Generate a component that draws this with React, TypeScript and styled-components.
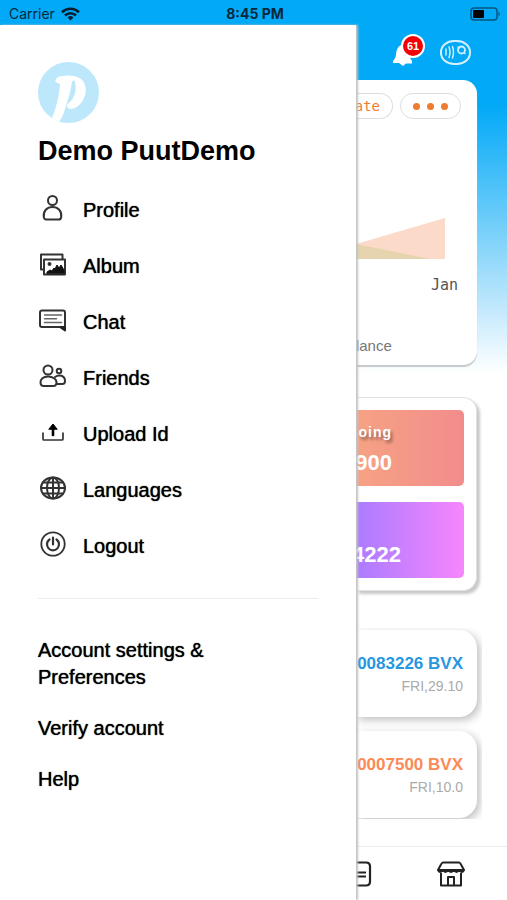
import React from "react";
import styled, { createGlobalStyle } from "styled-components";

const GlobalStyle = createGlobalStyle`
  * { box-sizing: border-box; }
  body { margin: 0; font-family: "Liberation Sans", Arial, sans-serif; color: #000; background: #fff; }
  button { border: 0; background: none; padding: 0; font: inherit; color: inherit; cursor: pointer; }
  a { color: inherit; text-decoration: none; }
  svg { display: block; flex: none; }
  h1, p, ul { margin: 0; padding: 0; }
  ul { list-style: none; }
`;

const Screen = styled.div`
  display: flex;
  flex-direction: column;
  min-height: 100vh;
  overflow: hidden;
`;

const StatusBar = styled.header`
  display: grid;
  grid-template-columns: 1fr auto 1fr;
  align-items: center;
  height: 25px;
  padding: 2px 6px 0 9px;
  background: #02a9f7;
  color: #06283c;
  font: 400 14px/20px Inter, sans-serif;
`;

const Carrier = styled.div`
  display: flex;
  align-items: center;
  gap: 6px;
`;

const Clock = styled.time`
  font-weight: 700;
`;

const BatterySlot = styled.div`
  display: flex;
  justify-content: flex-end;
`;

const Body = styled.div`
  display: flex;
  flex: 1;
`;

const Drawer = styled.aside`
  position: relative;
  z-index: 1;
  flex: 0 0 calc(70% + 1px);
  padding: 37px 38px 0 38px;
  background: #fff;
  box-shadow: 2px 0 2px #c2c2c2;
`;

const UserName = styled.h1`
  margin-top: 12px;
  font-size: 27px;
  line-height: 32px;
  white-space: nowrap;
`;

const Menu = styled.ul`
  padding: 15px 0 24px;
  border-bottom: 1px solid #ececec;
`;

const MenuLink = styled.a`
  display: flex;
  align-items: center;
  gap: 15px;
  height: 56px;
  font-size: 20px;
  text-shadow: 0 0 1px #000;
`;

const MenuIcon = styled.svg`
  width: 30px;
  height: 30px;
  fill: none;
  stroke: #333;
  stroke-width: 2;
  stroke-linecap: round;
  stroke-linejoin: round;
`;

const Links = styled.ul`
  display: flex;
  flex-direction: column;
  gap: 24px;
  max-width: 200px;
  padding-top: 38px;
`;

const TextLink = styled.a`
  display: block;
  font-size: 20px;
  line-height: 27px;
  text-shadow: 0 0 1px #000;
`;

const Dashboard = styled.main`
  display: flex;
  flex: 1;
  flex-direction: column;
  min-width: 0;
  overflow: hidden;
  background: linear-gradient(#02a9f7 80px, #5fc8f9 180px, #b5e4fc 270px, #fff 348px);
`;

const TopActions = styled.div`
  display: flex;
  align-items: center;
  justify-content: flex-end;
  gap: 15px;
  height: 55px;
  padding-right: 36px;
`;

const BellButton = styled.button`
  position: relative;
  width: 34px;
  height: 38px;
  color: #fff;
`;

const Badge = styled.span`
  position: absolute;
  top: 0;
  right: 0;
  width: 24px;
  height: 24px;
  border: 2px solid #fff;
  border-radius: 50%;
  background: #f60008;
  color: #fff;
  font: 700 11px/20px "Liberation Sans", sans-serif;
  text-align: center;
`;

const Panel = styled.section`
  margin-right: 30px;
  border: 1px solid #e2e2e2;
  border-left: 0;
  border-radius: 0 14px 14px 0;
  background: #fff;
`;

const ChartPanel = styled(Panel)`
  height: 285px;
  border-width: 0;
  padding: 13px 16px 0 0;
  box-shadow: 0 2px 1px #c4c8ca;
`;

const Pills = styled.div`
  display: flex;
  justify-content: flex-end;
  gap: 7px;
`;

const Pill = styled.button`
  display: flex;
  flex: none;
  align-items: center;
  justify-content: center;
  gap: 7px;
  min-width: 61px;
  height: 26px;
  border: 1px solid #dedede;
  border-radius: 13px;
  color: #ee7c30;
  font: 14px "DejaVu Sans Mono", monospace;
`;

const PillTail = styled(Pill)`
  min-width: 37px;
  border-left: 0;
  border-radius: 0 13px 13px 0;
  padding-right: 12px;
  justify-content: flex-end;
`;

const Dot = styled.span`
  width: 7px;
  height: 7px;
  border-radius: 50%;
  background: #ee7c30;
`;

const AreaChart = styled.svg`
  width: 89px;
  height: 41px;
  margin-top: 99px;
`;

const Month = styled.p`
  margin-top: 17px;
  padding-right: 3px;
  color: #555;
  font: 15px/18px "DejaVu Sans Mono", monospace;
  text-align: right;
`;

const Legend = styled.p`
  margin-top: 43px;
  color: #777;
  font-size: 15px;
  line-height: 18px;
`;

const TotalsPanel = styled(Panel)`
  display: flex;
  flex-direction: column;
  gap: 16px;
  margin-top: 32px;
  padding: 12px 12px 12px 0;
  box-shadow: 3px 3px 3px #c8c8c8;
`;

const Tile = styled.div<{ $from: string; $to: string; $inset: number }>`
  display: flex;
  flex-direction: column;
  align-items: flex-end;
  justify-content: flex-end;
  height: 76px;
  padding: 0 ${(p) => p.$inset}px 10px 0;
  border-radius: 0 5px 5px 0;
  background: linear-gradient(90deg, ${(p) => p.$from}, ${(p) => p.$to});
  color: #fff;
`;

const TileLabel = styled.span`
  margin-bottom: 9px;
  font-size: 14px;
  font-weight: 700;
  line-height: 18px;
  letter-spacing: 1px;
  text-shadow: 2px 3px 3px #00000066;
`;

const TileValue = styled.strong`
  font-size: 22px;
  line-height: 26px;
`;

const Transactions = styled.ul`
  display: flex;
  flex-direction: column;
  gap: 14px;
  margin: 37px 25px 0 0;
  padding: 2px 5px 1px 0;
  overflow: hidden;
`;

const Transaction = styled.li`
  display: flex;
  flex-direction: column;
  align-items: flex-end;
  height: 87px;
  padding: 23px 14px 0 0;
  border-radius: 0 18px 18px 0;
  background: #fff;
  box-shadow: 3px 3px 8px #00000040;
  white-space: nowrap;
`;

const Amount = styled.strong<{ $color: string }>`
  color: ${(p) => p.$color};
  font-size: 17px;
  line-height: 22px;
`;

const TxDate = styled.time`
  margin-top: 2px;
  color: #aaa;
  font-size: 14px;
  line-height: 18px;
`;

const TabBar = styled.nav`
  display: flex;
  align-items: center;
  justify-content: space-between;
  height: 54px;
  margin-top: auto;
  padding-right: 42px;
  border-top: 1px solid #ececec;
`;

const menu = [
  {
    label: "Profile",
    icon: (
      <>
        <circle cx="14.500" cy="5.500" r="4.500" />
        <path d="M5.800 22C5 16 9 12 14.500 12s9.500 4 8.700 10q-.3 2.500-2.500 2.500H8.300q-2.200 0-2.500-2.500z" />
      </>
    ),
  },
  {
    label: "Album",
    icon: (
      <>
        <path d="M5 18.500H3V3.500h21.500V8" />
        <path d="M6 8.500h21v15H6z" />
        <circle cx="11.500" cy="13" r="1" fill="#111" />
        <path d="M9 22.500v-1.500l3-2 2 1 2-3 1 1 2-4 2 3 2-3 3 5v3.500z" fill="#111" stroke="#111" strokeWidth="1" />
      </>
    ),
  },
  {
    label: "Chat",
    icon: (
      <>
        <path d="M4 3.500h21q2 0 2 2V20H4q-2 0-2-2V5.500q0-2 2-2z" />
        <path d="M6.500 8h17M6.500 11.700h12M6.500 15.500h17" stroke="#666" strokeWidth="1.500" />
        <path d="M22 20h5v3.500z" fill="#111" stroke="#222" />
      </>
    ),
  },
  {
    label: "Friends",
    icon: (
      <>
        <circle cx="10" cy="7" r="4.500" />
        <path d="M2.500 20C2 16 5.500 13.500 10 13.500s9 2.500 8.500 6.500q-.3 3-3 3H5.500q-2.700 0-3-3z" />
        <circle cx="21" cy="8" r="2.300" />
        <path d="M17 14c4-3 10-1.500 10 4q0 3-2.500 3H19" />
      </>
    ),
  },
  {
    label: "Upload Id",
    icon: (
      <>
        <path d="M5 14v6q0 1 1 1h18q1 0 1-1v-6" strokeWidth="1.700" />
        <path d="M15 16V9" stroke="#000" strokeWidth="2.600" />
        <path d="M11 10l4-5 4 5z" fill="#000" stroke="#000" strokeWidth="1" />
      </>
    ),
  },
  {
    label: "Languages",
    icon: (
      <>
        <ellipse cx="15" cy="13" rx="12" ry="10.500" />
        <ellipse cx="15" cy="13" rx="6" ry="10.500" />
        <path d="M15 3v20M3 13h24M5 7.500h20M5 18.500h20" />
      </>
    ),
  },
  {
    label: "Logout",
    icon: (
      <>
        <circle cx="15" cy="13" r="11.700" strokeWidth="1.800" />
        <path d="M11.500 8.500a6 6 0 1 0 7 0M15 6.500v7" strokeWidth="2.200" />
      </>
    ),
  },
];

const links = ["Account settings & Preferences", "Verify account", "Help"];

const transactions = [
  { amount: "0083226 BVX", date: "FRI,29.10", color: "#2797df" },
  { amount: "0007500 BVX", date: "FRI,10.0", color: "#fb8a57" },
];

function Logo() {
  return (
    <svg width="61" height="61" viewBox="0 0 61 61" role="img" aria-label="Puut">
      <defs>
        <clipPath id="disc">
          <circle cx="30.500" cy="30.500" r="30.500" />
        </clipPath>
      </defs>
      <g clipPath="url(#disc)">
        <rect width="61" height="61" fill="#bde8fc" />
        <path
          d="M19 21C16 20 17 15 24 14C30 13 38 13 43 17C49 22 49 31 45 38C41 45 34 49 30 46C28 44 29 42 31 41C36 37 39 29 37 20C37 18 35 18 34 20C33 28 30 38 27 47C25 54 22 60 18 62H11C17 51 21 36 22 22Q21 21 19 21Z"
          fill="#fff"
        />
      </g>
    </svg>
  );
}

export default function App() {
  return (
    <Screen>
      <GlobalStyle />
      <StatusBar>
        <Carrier>
          Carrier
          <svg width="19" height="14" viewBox="0 0 19 14" fill="none" stroke="#06202f" strokeWidth="2.600">
            <path d="M1 5.200a12.200 12.200 0 0 1 17 0M4 8.500a8 8 0 0 1 11 0" />
            <path d="M6.500 10.500a4.300 4.300 0 0 1 6 0l-3 3z" fill="#06202f" stroke="none" />
          </svg>
        </Carrier>
        <Clock>8:45 PM</Clock>
        <BatterySlot>
          <svg width="31" height="14" viewBox="0 0 31 14">
            <rect x="1" y="1" width="26" height="12" rx="3" fill="none" stroke="#075580" strokeWidth="1.500" />
            <rect x="3" y="3" width="11" height="8" rx="1" fill="#000" />
            <path d="M28.500 4.500q3 2.500 0 5z" fill="#075580" />
          </svg>
        </BatterySlot>
      </StatusBar>
      <Body>
        <Drawer>
          <Logo />
          <UserName>Demo PuutDemo</UserName>
          <Menu>
            {menu.map((m) => (
              <li key={m.label}>
                <MenuLink href="#">
                  <MenuIcon viewBox="0 0 30 30" aria-hidden="true">{m.icon}</MenuIcon>
                  {m.label}
                </MenuLink>
              </li>
            ))}
          </Menu>
          <Links>
            {links.map((label) => (
              <li key={label}>
                <TextLink href="#">{label}</TextLink>
              </li>
            ))}
          </Links>
        </Drawer>
        <Dashboard>
          <TopActions>
            <BellButton aria-label="Notifications">
              <svg width="34" height="38" viewBox="0 0 34 38" fill="currentColor">
                <path d="M14 10C8 10 5 15 5 21Q5 24 2 27V29H8L12 32L15 29.500H21V27Q19 25 19 21V12Z" />
              </svg>
              <Badge>61</Badge>
            </BellButton>
            <button aria-label="Scan card">
              <svg width="31" height="25" viewBox="0 0 31 25" fill="none" stroke="#d3f1ff" strokeLinecap="round">
                <rect x="1" y="1" width="29" height="23" rx="13" ry="11" strokeWidth="2" />
                <path d="M6 9v6M9 7q2 5 0 10.500M12.500 6.500q2 6 0 11.500" strokeWidth="1.500" />
                <circle cx="21.500" cy="10" r="3.500" strokeWidth="1.800" />
                <path d="M18 7l1 1M24 12.500l1 1" strokeWidth="1.500" />
              </svg>
            </button>
          </TopActions>
          <ChartPanel>
            <Pills>
              <PillTail>ate</PillTail>
              <Pill aria-label="More">
                <Dot />
                <Dot />
                <Dot />
              </Pill>
            </Pills>
            <AreaChart viewBox="0 0 90 41" preserveAspectRatio="none">
              <path d="M0 26L90 0V41H0z" fill="#fbdaca" />
              <path d="M0 26L75 41H0z" fill="#e5d4ae" />
            </AreaChart>
            <Month>Jan</Month>
            <Legend>lance</Legend>
          </ChartPanel>
          <TotalsPanel>
            <Tile $from="#f6a283" $to="#f28c8c" $inset={72}>
              <TileLabel>oing</TileLabel>
              <TileValue>900</TileValue>
            </Tile>
            <Tile $from="#aa7cff" $to="#f786fd" $inset={63}>
              <TileValue>4222</TileValue>
            </Tile>
          </TotalsPanel>
          <Transactions>
            {transactions.map((t) => (
              <Transaction key={t.amount}>
                <Amount $color={t.color}>{t.amount}</Amount>
                <TxDate>{t.date}</TxDate>
              </Transaction>
            ))}
          </Transactions>
          <TabBar>
            <button aria-label="Statements">
              <svg width="16" height="26" viewBox="0 0 16 26" fill="none" stroke="#222" strokeWidth="2.200">
                <path d="M0 1.500h10q4 0 4 4v15q0 4-4 4H0" />
                <path d="M0 11.500h10M0 15.500h10" />
              </svg>
            </button>
            <button aria-label="Store">
              <svg width="28" height="26" viewBox="0 0 28 26" fill="none" stroke="#222" strokeWidth="2" strokeLinejoin="round">
                <path d="M6 1.500h16q1 0 2 2l3 5.500H1l3-5.500q1-2 2-2z" />
                <path d="M1 9q2 4 5 0 2.500 4 5 0 3 4 6 0 2.500 4 5 0 3 4 5 0M4 12v12.500h20V12M11 24.500V16h6v8.500" />
              </svg>
            </button>
          </TabBar>
        </Dashboard>
      </Body>
    </Screen>
  );
}
